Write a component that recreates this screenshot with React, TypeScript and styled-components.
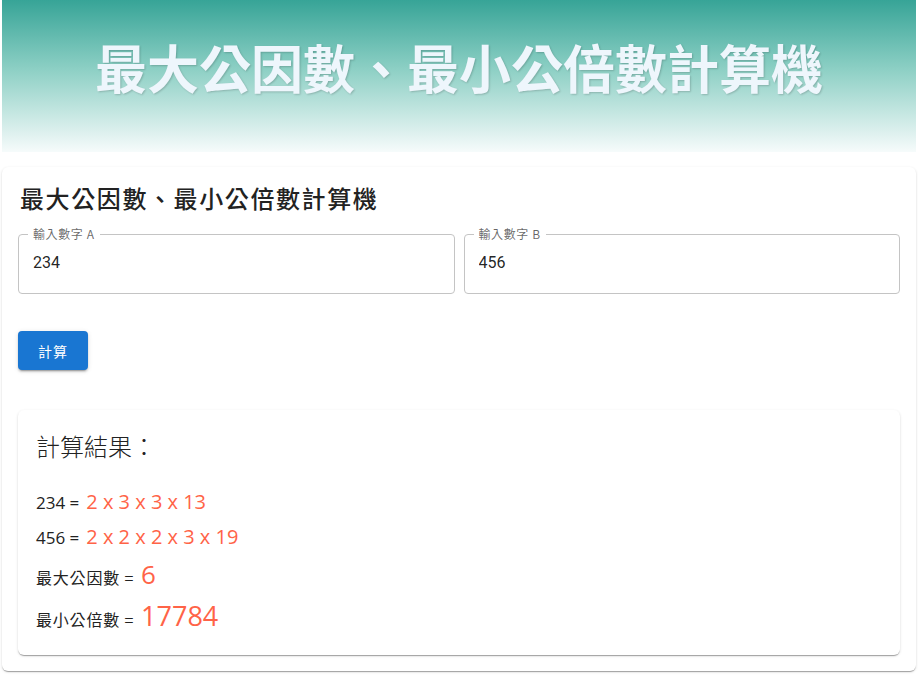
import styled, { createGlobalStyle } from 'styled-components';

const GlobalStyle = createGlobalStyle`
  html, body {
    margin: 0;
    padding: 0;
    background: #fff;
  }
  body {
    font-family: "Open Sans", "Noto Sans CJK TC", sans-serif;
    color: rgba(0, 0, 0, 0.87);
  }
`;

const cjk = `"Noto Sans CJK TC", "Noto Sans", sans-serif`;
const latin = `"Open Sans", "Noto Sans CJK TC", sans-serif`;

const Page = styled.div`
  padding: 0 2px 4px;
`;

const Banner = styled.header`
  height: 152px;
  display: flex;
  align-items: center;
  justify-content: center;
  background: linear-gradient(to bottom, #37a497 0%, #8ccfc4 45%, #f6fbfb 100%);
`;

const BannerTitle = styled.h1`
  margin: 0 0 20px;
  font-family: ${cjk};
  font-size: 52px;
  font-weight: 700;
  letter-spacing: 0;
  white-space: nowrap;
  color: #eef6fc;
  text-shadow: 1px 1px 2px rgba(0, 0, 0, 0.18);
`;

const Card = styled.section`
  margin-top: 15px;
  padding: 15px 16px 16px;
  background: #fff;
  border-radius: 6px;
  box-shadow: 0px 2px 1px -1px rgba(0, 0, 0, 0.2), 0px 1px 1px 0px rgba(0, 0, 0, 0.14),
    0px 1px 3px 0px rgba(0, 0, 0, 0.12);
`;

const CardTitle = styled.h2`
  margin: 0 0 20px;
  font-family: ${cjk};
  font-size: 24px;
  font-weight: 500;
  line-height: 32px;
  letter-spacing: 1.6px;
  padding-left: 2px;
  color: #222;
`;

const Fields = styled.div`
  display: grid;
  grid-template-columns: 1fr 1fr;
  gap: 9px;
`;

const Field = styled.fieldset`
  margin: -6px 0 0;
  padding: 0 9px;
  height: 66px;
  box-sizing: border-box;
  border: 1px solid #c4c4c4;
  border-radius: 4px;
  display: flex;
  flex-direction: column;
`;

const Legend = styled.legend`
  padding: 0 5px;
  font-family: ${cjk};
  font-size: 12px;
  line-height: 12px;
  letter-spacing: 0.6px;
  color: rgba(0, 0, 0, 0.6);
`;

const Input = styled.input`
  border: none;
  outline: none;
  background: transparent;
  padding: 11px 5px 0;
  font-family: Roboto, ${cjk};
  font-size: 16px;
  line-height: 23px;
  color: rgba(0, 0, 0, 0.87);
`;

const Button = styled.button`
  margin-top: 37px;
  width: 70px;
  height: 39px;
  border: none;
  border-radius: 4px;
  background: #1976d2;
  color: #fff;
  font-family: ${cjk};
  font-size: 14px;
  letter-spacing: 1px;
  box-shadow: 0px 3px 1px -2px rgba(0, 0, 0, 0.2), 0px 2px 2px 0px rgba(0, 0, 0, 0.14),
    0px 1px 5px 0px rgba(0, 0, 0, 0.12);
`;

const Result = styled.div`
  margin-top: 40px;
  padding: 20px 18px 20px;
  border-radius: 6px;
  box-shadow: 0px 2px 1px -1px rgba(0, 0, 0, 0.2), 0px 1px 1px 0px rgba(0, 0, 0, 0.14),
    0px 1px 3px 0px rgba(0, 0, 0, 0.12);
`;

const ResultTitle = styled.h3`
  margin: 0 0 25px;
  font-family: ${cjk};
  font-size: 24px;
  font-weight: 300;
  line-height: 32px;
  color: #222;
`;

const Row = styled.div<{ $h: number; $gap: number }>`
  display: flex;
  align-items: baseline;
  height: ${(p) => p.$h}px;
  line-height: ${(p) => p.$h}px;
  margin-top: ${(p) => p.$gap}px;
  white-space: pre;
`;

const Label = styled.span<{ $cjk?: boolean }>`
  font-family: ${(p) => (p.$cjk ? cjk : latin)};
  font-size: ${(p) => (p.$cjk ? 16 : 17)}px;
  color: #222;
  letter-spacing: ${(p) => (p.$cjk ? '0.8px' : '0')};
`;

const Value = styled.span<{ $size: number }>`
  font-family: ${latin};
  font-size: ${(p) => p.$size}px;
  color: #ff6347;
  margin-left: 7px;
`;

export default function App() {
  return (
    <Page>
      <GlobalStyle />
      <Banner>
        <BannerTitle>最大公因數、最小公倍數計算機</BannerTitle>
      </Banner>
      <Card>
        <CardTitle>最大公因數、最小公倍數計算機</CardTitle>
        <Fields>
          <Field>
            <Legend>輸入數字 A</Legend>
            <Input defaultValue="234" />
          </Field>
          <Field>
            <Legend>輸入數字 B</Legend>
            <Input defaultValue="456" />
          </Field>
        </Fields>
        <Button>計算</Button>
        <Result>
          <ResultTitle>計算結果：</ResultTitle>
          <Row $h={30} $gap={0}>
            <Label>234 =</Label>
            <Value $size={20}>2 x 3 x 3 x 13</Value>
          </Row>
          <Row $h={30} $gap={5}>
            <Label>456 =</Label>
            <Value $size={20}>2 x 2 x 2 x 3 x 19</Value>
          </Row>
          <Row $h={36} $gap={4}>
            <Label $cjk>最大公因數 =</Label>
            <Value $size={26}>6</Value>
          </Row>
          <Row $h={38} $gap={5}>
            <Label $cjk>最小公倍數 =</Label>
            <Value $size={27}>17784</Value>
          </Row>
        </Result>
      </Card>
    </Page>
  );
}
